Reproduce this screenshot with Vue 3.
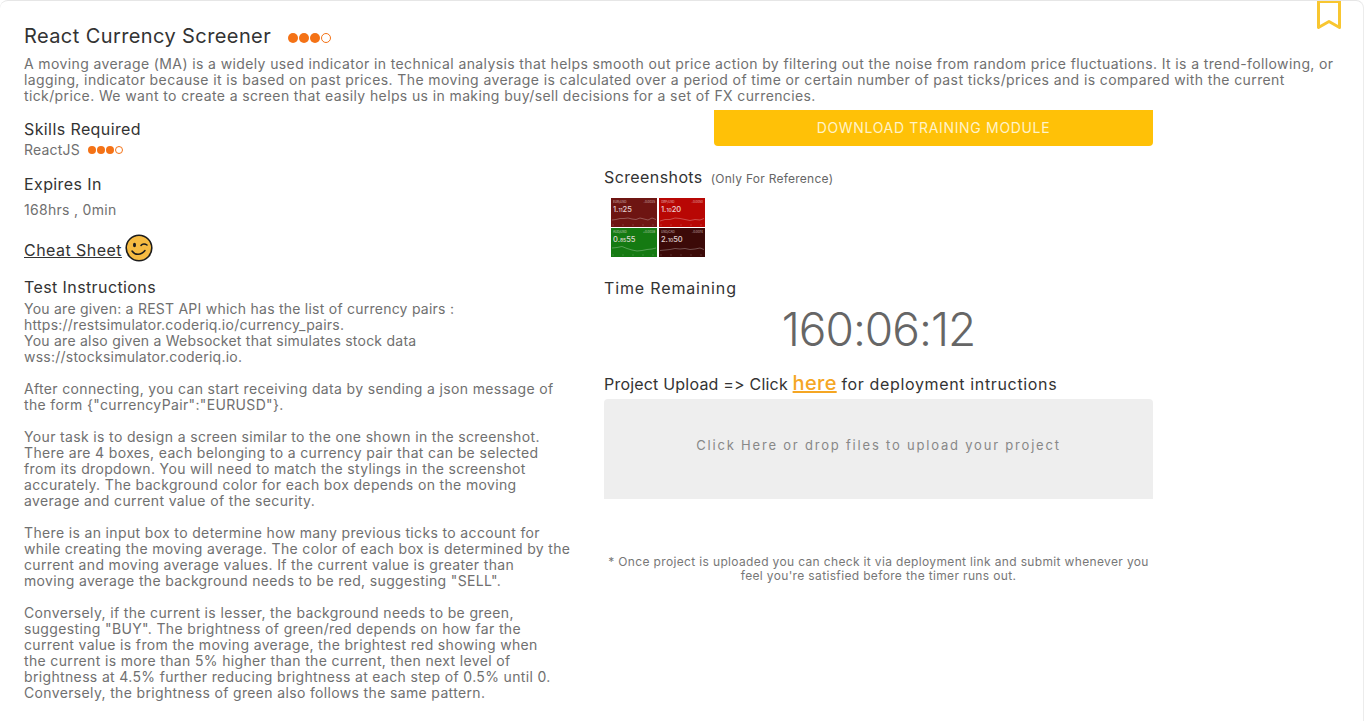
<script setup>
const thumbs = [
  { bg: '#6e1512', pair: 'EUR/USD', chg: '-0.0035', a: '1.', b: '11', c: '25', pts: '2,22 10,21 18,19 26,19 34,18 42,20 50,21 58,18 66,20 74,22 82,18 90,21' },
  { bg: '#b80704', pair: 'GBP/USD', chg: '-0.0050', a: '1.', b: '10', c: '20', pts: '2,24 12,21 22,21 32,18 42,19 52,21 62,23 72,21 82,22 90,19' },
  { bg: '#157a12', pair: 'AUD/USD', chg: '+0.0038', a: '0.', b: '85', c: '55', pts: '2,18 12,17 22,15 32,19 42,22 52,24 62,23 72,21 82,20 90,18' },
  { bg: '#3c0a08', pair: 'USD/CAD', chg: '-0.0074', a: '2.', b: '10', c: '50', pts: '2,23 12,22 22,21 32,19 42,20 52,19 62,21 72,20 82,18 90,21' },
]
</script>

<template>
  <div class="page">
    <svg class="bookmark" viewBox="0 0 24 30" width="24" height="30" aria-hidden="true">
      <path d="M1.5 1.5H22.5V27.5L12 21.5L1.5 27.5Z" fill="none" stroke="#f8c630" stroke-width="3" stroke-linejoin="round" />
    </svg>
    <header class="head">
      <div class="title-row">
        <h1>React Currency Screener</h1>
        <span class="dots big"><i></i><i></i><i></i><i class="o"></i></span>
      </div>
      <p class="desc">A moving average (MA) is a widely used indicator in technical analysis that helps smooth out price action by filtering out the noise from random price fluctuations. It is a trend-following, or<br>lagging, indicator because it is based on past prices. The moving average is calculated over a period of time or certain number of past ticks/prices and is compared with the current<br>tick/price. We want to create a screen that easily helps us in making buy/sell decisions for a set of FX currencies.</p>
    </header>
    <div class="cols">
      <section class="left">
        <h2 class="skills">Skills Required</h2>
        <div class="skill">ReactJS <span class="dots"><i></i><i></i><i></i><i class="o"></i></span></div>
        <h2 class="exp">Expires In</h2>
        <div class="hrs">168hrs , 0min</div>
        <div class="cheat">
          <a href="#">Cheat Sheet</a>
          <svg viewBox="0 0 28 28" width="28" height="28" aria-hidden="true">
            <circle cx="14" cy="14" r="12.8" fill="#f6bb42" stroke="#1c1c1c" stroke-width="1.6" />
            <ellipse cx="9.5" cy="11" rx="1.5" ry="2.2" fill="#1c1c1c" />
            <path d="M16 11.5C17.5 9.5 20 9.5 22 11" fill="none" stroke="#1c1c1c" stroke-width="1.5" stroke-linecap="round" />
            <path d="M7 17C10 21.5 16 21.5 20 16.5" fill="none" stroke="#1c1c1c" stroke-width="1.5" stroke-linecap="round" />
          </svg>
        </div>
        <h2 class="ins">Test Instructions</h2>
        <p class="body first">You are given: a REST API which has the list of currency pairs :<br>https://restsimulator.coderiq.io/currency_pairs.<br>You are also given a Websocket that simulates stock data<br>wss://stocksimulator.coderiq.io.</p>
        <p class="body">After connecting, you can start receiving data by sending a json message of<br>the form {"currencyPair":"EURUSD"}.</p>
        <p class="body">Your task is to design a screen similar to the one shown in the screenshot.<br>There are 4 boxes, each belonging to a currency pair that can be selected<br>from its dropdown. You will need to match the stylings in the screenshot<br>accurately. The background color for each box depends on the moving<br>average and current value of the security.</p>
        <p class="body">There is an input box to determine how many previous ticks to account for<br>while creating the moving average. The color of each box is determined by the<br>current and moving average values. If the current value is greater than<br>moving average the background needs to be red, suggesting "SELL".</p>
        <p class="body">Conversely, if the current is lesser, the background needs to be green,<br>suggesting "BUY". The brightness of green/red depends on how far the<br>current value is from the moving average, the brightest red showing when<br>the current is more than 5% higher than the current, then next level of<br>brightness at 4.5% further reducing brightness at each step of 0.5% until 0.<br>Conversely, the brightness of green also follows the same pattern.</p>
      </section>
      <section class="right">
        <button class="dl">DOWNLOAD TRAINING MODULE</button>
        <div class="shots-head"><h2>Screenshots</h2><small>(Only For Reference)</small></div>
        <div class="thumbs">
          <div v-for="t in thumbs" :key="t.pair" class="thumb" :style="{ background: t.bg }">
            <div class="t-top"><span>{{ t.pair }}</span><span>{{ t.chg }}</span></div>
            <div class="t-big">{{ t.a }}<small>{{ t.b }}</small>{{ t.c }}</div>
            <svg viewBox="0 0 92 58" preserveAspectRatio="none" aria-hidden="true">
              <g transform="translate(0 22)">
                <polyline :points="t.pts" fill="none" stroke="#ffffff" stroke-opacity=".4" stroke-width="1.4" />
              </g>
              <path d="M4 53V55M24 53V55M44 53V55M64 53V55M84 53V55" stroke="#ffffff" stroke-opacity=".4" stroke-width="1.5" />
            </svg>
          </div>
        </div>
        <h2 class="time-h">Time Remaining</h2>
        <div class="timer">160:06:12</div>
        <h2 class="upload-h">Project Upload =&gt; Click <a href="#">here</a> <span>for deployment intructions</span></h2>
        <div class="drop">Click Here or drop files to upload your project</div>
        <p class="note">* Once project is uploaded you can check it via deployment link and submit whenever you<br>feel you're satisfied before the timer runs out.</p>
      </section>
    </div>
  </div>
</template>

<style>
html, body { margin: 0; background: #fff; overflow: hidden; }
</style>

<style scoped>
.page {
  position: relative;
  box-sizing: border-box;
  width: 1364px;
  height: 721px;
  overflow: hidden;
  padding: 23px 0 0 24px;
  font-family: Inter, "Noto Sans", sans-serif;
  font-feature-settings: "calt" 0;
  color: #707070;
  font-size: 14px;
  line-height: 16px;
  background: #fff;
  border-top: 1px solid #e6e6e6;
  border-right: 1px solid #ececec;
  border-radius: 8px 8px 0 0;
}
.bookmark { position: absolute; top: -1px; left: 1317px; }
h1, h2, p { margin: 0; font-weight: 400; }
h1 { font-size: 20px; line-height: 24px; color: #333; letter-spacing: .4px; }
h2 { font-size: 16px; line-height: 20px; color: #333; letter-spacing: .4px; }
.title-row { display: flex; align-items: center; gap: 17px; }
.dots { display: inline-flex; gap: 0; vertical-align: middle; }
.dots i { width: 8px; height: 8px; border-radius: 50%; background: #f47216; margin-right: 1px; box-sizing: border-box; }
.dots i.o { background: #fff; border: 1px solid #f47216; }
.dots.big { margin-top: 3px; }
.dots.big i { width: 10px; height: 10px; margin-right: 1px; }
.desc { margin-top: 8px; white-space: nowrap; letter-spacing: .385px; }
.cols { display: flex; margin-top: 6px; }
.left { width: 580px; white-space: nowrap; }
.skills { margin-top: 9px; }
.skill { margin-top: 3px; display: flex; align-items: center; gap: 8px; letter-spacing: .2px; }
.exp { margin-top: 16px; }
.hrs { margin-top: 8px; letter-spacing: .3px; }
.cheat { margin-top: 16px; display: flex; align-items: flex-end; height: 28px; gap: 3px; }
.cheat a { color: #333; font-size: 16px; line-height: 20px; letter-spacing: .45px; margin-bottom: 2px; }
.ins { margin-top: 15px; margin-bottom: 4px; }
.body { letter-spacing: .35px; margin-bottom: 16px; }
.body.first { letter-spacing: .24px; }
.right { width: 549px; display: flex; flex-direction: column; white-space: nowrap; }
.dl {
  align-self: flex-end;
  box-sizing: border-box;
  width: 439px; height: 36px;
  padding: 0 0 1px;
  border: 0; border-radius: 0 0 4px 4px;
  background: #ffc107; color: #fff3c8;
  font: 400 14px/35px Inter, sans-serif;
  letter-spacing: .67px;
}
.shots-head { margin-top: 21px; display: flex; align-items: baseline; gap: 8px; }
.shots-head small { font-size: 12px; color: #666; letter-spacing: .25px; }
.thumbs { margin: 11px 0 0 7px; display: grid; grid-template-columns: 46px 46px; grid-auto-rows: 29px; gap: 1px 2px; }
.thumb { position: relative; overflow: hidden; color: #f4e4e4; }
.thumb svg { position: absolute; inset: 0; width: 100%; height: 100%; }
.t-top { position: absolute; left: 2px; right: 2px; top: 2px; display: flex; justify-content: space-between; font-size: 3px; line-height: 4px; letter-spacing: 0; opacity: .7; }
.t-big { position: absolute; left: 2px; top: 8px; font-size: 7.5px; line-height: 8px; font-weight: 500; letter-spacing: 0; opacity: .9; }
.t-big small { font-size: 5px; }
.time-h { margin-top: 21px; letter-spacing: .85px; }
.timer { margin-top: 5px; text-align: center; font-size: 46px; line-height: 52px; font-weight: 300; color: #666; letter-spacing: -1px; }
.upload-h { margin-top: 18px; line-height: 20px; letter-spacing: .2px; }
.upload-h span { letter-spacing: .65px; }
.upload-h a { color: #f5a623; font-size: 20px; font-weight: 500; letter-spacing: .3px; }
.drop {
  box-sizing: border-box;
  margin-top: 5px; height: 100px; padding-bottom: 8px;
  background: #eee; color: #888;
  display: flex; align-items: center; justify-content: center;
  font-size: 13px; letter-spacing: 1.8px;
  border-radius: 4px 4px 0 0;
}
.note { margin-top: 56px; text-align: center; font-size: 12px; line-height: 14px; color: #777; letter-spacing: .35px; }
</style>
